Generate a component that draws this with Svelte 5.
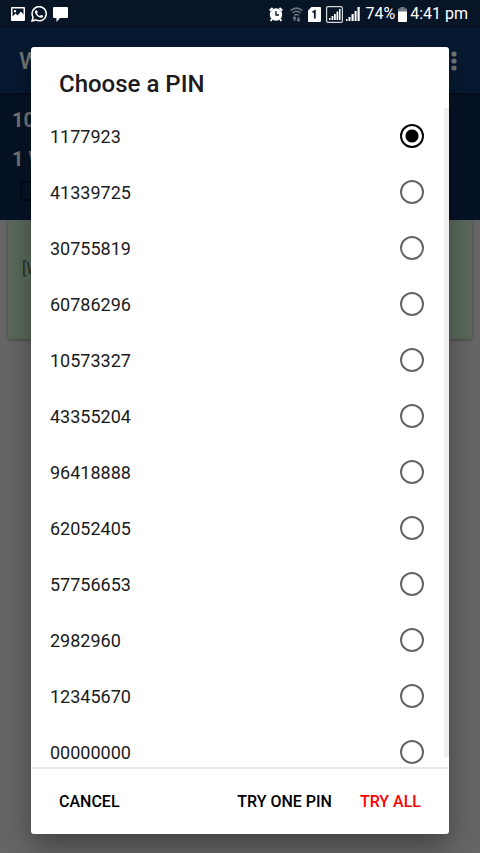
<script>
  const pins = [
    '1177923', '41339725', '30755819', '60786296', '10573327', '43355204',
    '96418888', '62052405', '57756653', '2982960', '12345670', '00000000'
  ];
  let selected = $state('1177923');
</script>

<div class="screen">
  <header class="status">
    <div class="notices">
      <svg width="14" height="14" viewBox="0 0 14 14" aria-label="Picture">
        <path fill-rule="evenodd" fill="#fff" d="M1 0h12a1 1 0 0 1 1 1v12a1 1 0 0 1-1 1H1a1 1 0 0 1-1-1V1a1 1 0 0 1 1-1zM1.500 1.500v8l3-3 2 2 3.500-4 2.500 3V1.500zM4 3a1.200 1.200 0 1 1 0 2.400A1.200 1.200 0 0 1 4 3z" />
      </svg>
      <svg width="16" height="16" viewBox="0 0 24 24" aria-label="WhatsApp">
        <path fill="#fff" d="M17.472 14.382c-.297-.149-1.758-.867-2.030-.967-.273-.099-.471-.148-.670.150-.197.297-.767.966-.940 1.164-.173.199-.347.223-.644.075-.297-.150-1.255-.463-2.390-1.475-.883-.788-1.480-1.761-1.653-2.059-.173-.297-.018-.458.130-.606.134-.133.298-.347.446-.520.149-.174.198-.298.298-.497.099-.198.050-.371-.025-.520-.075-.149-.669-1.612-.916-2.207-.242-.579-.487-.500-.669-.510-.173-.008-.371-.010-.570-.010-.198 0-.520.074-.792.372-.272.297-1.040 1.016-1.040 2.479 0 1.462 1.065 2.875 1.213 3.074.149.198 2.096 3.200 5.077 4.487.709.306 1.262.489 1.694.625.712.227 1.360.195 1.871.118.571-.085 1.758-.719 2.006-1.413.248-.694.248-1.289.173-1.413-.074-.124-.272-.198-.570-.347" />
        <path fill="none" stroke="#fff" stroke-width="2.300" d="M1.600 22.400l1.500-5.500A10.600 10.600 0 1 1 7.200 20.900z" />
      </svg>
      <svg width="15" height="15" viewBox="0 0 15 15" aria-label="Message">
        <path fill="#fff" d="M1 0h13a1 1 0 0 1 1 1v9a1 1 0 0 1-1 1H7l-3.500 4v-4H1a1 1 0 0 1-1-1V1a1 1 0 0 1 1-1z" />
      </svg>
    </div>
    <div class="system">
      <svg width="14" height="15" viewBox="0 0 14 15" aria-label="Alarm">
        <circle cx="7" cy="7.500" r="6.200" fill="#fff" />
        <path d="M.6 3.500L3.600.900M13.400 3.500L10.400.900M3 12l-1.300 2M11 12l1.300 2" stroke="#fff" stroke-width="2" />
        <path d="M7 4v4h3" fill="none" stroke="#07172b" stroke-width="1.300" />
      </svg>
      <svg class="wifi" width="13" height="15" viewBox="0 0 13 15" aria-label="Wi-Fi">
        <g fill="none" stroke="#6f7681" stroke-width="1.500">
          <path d="M.6 3.600q5.900-5 11.800 0M2.500 6q4-3.400 8 0M4.400 8.300q2.100-1.700 4.200 0" />
          <path d="M4.500 14v-4M3 11.500L4.500 10 6 11.500M8.500 10v4M7 12.500L8.500 14l1.500-1.500" />
        </g>
      </svg>
      <svg class="sim" width="13" height="15" viewBox="0 0 13 15" aria-label="SIM 1">
        <path fill="#fff" d="M3.500 0H12a1 1 0 0 1 1 1v13a1 1 0 0 1-1 1H1a1 1 0 0 1-1-1V3.500z" />
        <path d="M4.500 5.200L6.800 4v7.500" fill="none" stroke="#07172b" stroke-width="1.800" />
      </svg>
      <svg width="17" height="17" viewBox="0 0 17 17" aria-label="Signal SIM 1">
        <rect x=".6" y=".6" width="15.800" height="15.800" rx="1.500" fill="none" stroke="#d5d8dc" stroke-width="1.200" />
        <path fill="#fff" d="M3 12h1.500v2H3zM5.500 10h1.800v4H5.500zM8 8h1.800v6H8zM10.500 5.500h1.800v8.500h-1.800zM13 3h1.500v11H13z" />
      </svg>
      <svg width="14" height="14" viewBox="0 0 14 14" aria-label="Signal SIM 2">
        <path fill="#fff" d="M0 12h1.500v2H0zM2.500 10h2v4h-2zM5.500 7h2.200v7H5.500zM8.600 4h2v10h-2zM11.500 0h2.200v14h-2.200z" />
      </svg>
      <span class="percent">74%</span>
      <svg width="9" height="15" viewBox="0 0 9 15" aria-label="Battery">
        <path fill="#737b87" d="M2.500 0h4v1.500H9V5H0V1.500h2.500z" />
        <path fill="#fff" d="M0 4.500h9V14a1 1 0 0 1-1 1H1a1 1 0 0 1-1-1z" />
      </svg>
      <span>4:41 pm</span>
    </div>
  </header>

  <div class="page" inert>
    <div class="appbar">
      <span>W</span>
      <button aria-label="More options">
        <svg width="6" height="20" viewBox="0 0 6 20" fill="#747474">
          <circle cx="3" cy="3" r="2.600" /><circle cx="3" cy="10" r="2.600" /><circle cx="3" cy="17" r="2.600" />
        </svg>
      </button>
    </div>
    <div class="summary">
      <span>10</span>
      <span>1 W</span>
      <input type="checkbox" aria-label="Filter" />
    </div>
    <div class="card">[W</div>
  </div>

  <div class="overlay">
    <div class="dialog" role="dialog" aria-modal="true" aria-labelledby="title">
      <h1 id="title">Choose a PIN</h1>
      <div class="scroller">
        <div class="list" role="radiogroup" aria-labelledby="title">
          {#each pins as pin}
            <label>
              <span>{pin}</span>
              <input type="radio" name="pin" value={pin} bind:group={selected} />
            </label>
          {/each}
        </div>
        <div class="thumb"></div>
      </div>
      <div class="actions">
        <button>CANCEL</button>
        <button class="one">TRY ONE PIN</button>
        <button class="all">TRY ALL</button>
      </div>
    </div>
  </div>
</div>

<style>
  .screen {
    position: relative;
    display: flex;
    flex-direction: column;
    height: 100vh;
    overflow: hidden;
    background: #666;
    font-family: Roboto, sans-serif;
  }
  button {
    border: 0;
    padding: 0;
    background: none;
    font: inherit;
    color: inherit;
  }
  .status {
    display: flex;
    flex: none;
    justify-content: space-between;
    align-items: center;
    height: 28px;
    padding: 0 12px 0 11px;
    background: #071527;
    color: #fff;
    font-size: 16px;
    line-height: 28px;
  }
  .notices,
  .system {
    display: flex;
    align-items: center;
  }
  .notices { gap: 6px; }
  .system { gap: 3px; }
  .wifi { margin: 0 2px 0 4px; }
  .sim { margin-right: 2px; }
  .percent { margin-left: 2px; }
  .page {
    display: flex;
    flex-direction: column;
    color: #747474;
  }
  .appbar {
    position: relative;
    display: flex;
    justify-content: space-between;
    align-items: center;
    height: 65px;
    padding: 0 23px 0 19px;
    background: #071931;
    font-size: 24px;
    font-weight: 500;
    box-shadow: 0 1px 3px #020a15;
  }
  .appbar svg { display: block; }
  .summary {
    display: flex;
    flex-direction: column;
    align-items: flex-start;
    gap: 11px;
    height: 127px;
    padding: 13px 12px;
    box-sizing: border-box;
    background: #061326;
    font-size: 20px;
    font-weight: 700;
    line-height: 28px;
  }
  .summary input {
    appearance: none;
    width: 20px;
    height: 20px;
    margin: -3px 8px;
    border: 2px solid #030a15;
    border-radius: 2px;
  }
  .card {
    height: 118px;
    margin: 1px 8px;
    padding: 36px 14px;
    box-sizing: border-box;
    border-radius: 0 0 3px 3px;
    background: #5a695a;
    color: #262e26;
    font-size: 16px;
    line-height: 24px;
    box-shadow: 0 1px 3px #444;
  }
  .overlay {
    position: absolute;
    inset: 0;
    display: flex;
    padding: 47px 31px 19px;
  }
  .dialog {
    display: flex;
    flex: 1;
    flex-direction: column;
    min-width: 0;
    border-radius: 3px;
    background: #fff;
    box-shadow: 0 12px 28px rgba(0, 0, 0, 0.35);
    color: #1b1b1b;
  }
  h1 {
    flex: none;
    margin: 0;
    padding: 21px 28px 8px;
    font-size: 24px;
    font-weight: 500;
    line-height: 32px;
  }
  .scroller {
    display: flex;
    flex: 1;
    min-height: 0;
  }
  .list {
    flex: 1;
    overflow-y: auto;
    scrollbar-width: none;
  }
  .thumb {
    width: 5px;
    margin-bottom: 10px;
    background: #efefef;
  }
  label {
    display: flex;
    justify-content: space-between;
    align-items: center;
    height: 56px;
    padding: 0 20px 0 19px;
    font-size: 18px;
  }
  label input {
    appearance: none;
    width: 24px;
    height: 24px;
    margin: 0;
    border: 2px solid #666;
    border-radius: 50%;
  }
  label input:checked {
    border-color: #000;
    background: radial-gradient(circle, #000 6px, transparent 7px);
  }
  .actions {
    display: flex;
    flex: none;
    align-items: center;
    height: 67px;
    padding: 0 28px;
    box-sizing: border-box;
    border-top: 2px solid #e8e8e8;
    color: #000;
    font-size: 16px;
    font-weight: 500;
  }
  .one { margin-left: auto; }
  .all {
    margin-left: 28px;
    color: #f00;
  }
</style>
